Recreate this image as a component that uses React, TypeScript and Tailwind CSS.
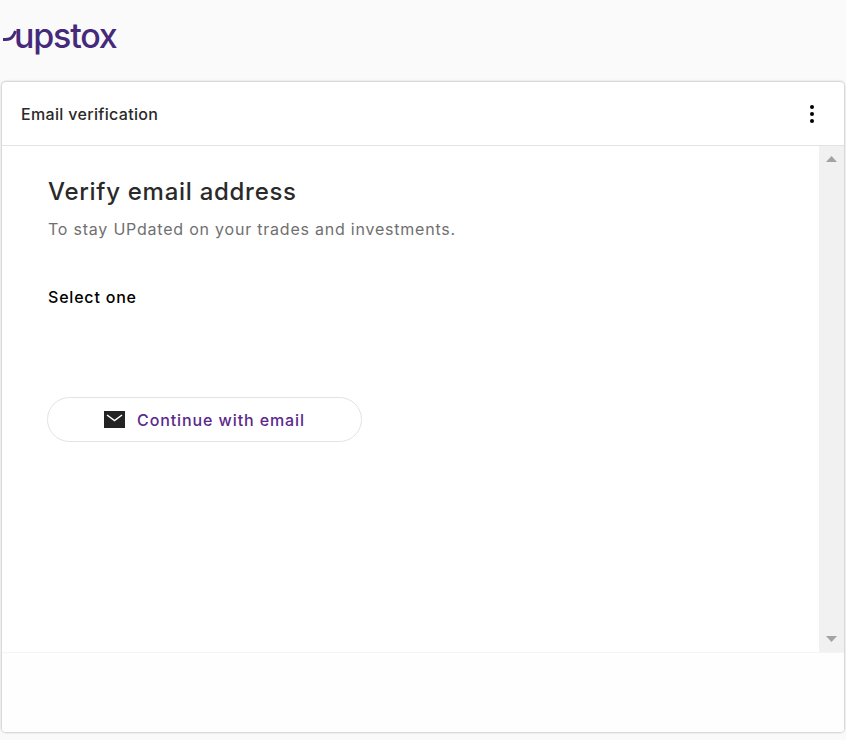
import React from "react";

function MailIcon() {
  return (
    <svg width="21" height="17" viewBox="0 0 21 17" className="shrink-0">
      <rect width="21" height="17" fill="#232323" />
      <path d="M3 4 L10.5 9.5 L18 4" fill="none" stroke="#ffffff" strokeWidth="1.5" />
    </svg>
  );
}

function Scrollbar() {
  return (
    <div className="flex w-[25px] shrink-0 flex-col items-center justify-between bg-[#f1f1f1] py-[10px]">
      <svg width="11" height="6" viewBox="0 0 11 6">
        <path d="M5.5 0 L11 6 L0 6 Z" fill="#a3a3a3" />
      </svg>
      <svg width="11" height="6" viewBox="0 0 11 6">
        <path d="M0 0 L11 0 L5.5 6 Z" fill="#a3a3a3" />
      </svg>
    </div>
  );
}

export default function App() {
  return (
    <div className="h-[740px] w-[846px] overflow-hidden bg-[#fafafa] font-['Inter',sans-serif]">
      <div className="flex h-[82px] items-start pl-[2px] pt-[14px]">
        <div className="flex items-center text-[#452a7c]">
          <svg width="12" height="20" viewBox="0 0 12 20" className="shrink-0 overflow-visible">
            <path d="M1 13.5 C5 13.5 10 15 13.5 5" fill="none" stroke="#452a7c" strokeWidth="3" />
          </svg>
          <span className="text-[34px] font-medium leading-[44px] tracking-[-1.2px]">upstox</span>
        </div>
      </div>

      <div className="mx-[2px] flex h-[650px] flex-col rounded-[4px] bg-white shadow-[0_0_2px_1px_rgba(0,0,0,0.18)]">
        <div className="flex h-[64px] shrink-0 items-center justify-between border-b border-[#e3e3e3] pl-[19px] pr-[30px]">
          <span className="text-[16px] font-medium tracking-[0.33px] text-[#2a2a2a]">Email verification</span>
          <div className="flex flex-col gap-[3px]">
            <div className="h-1 w-1 rounded-full bg-black" />
            <div className="h-1 w-1 rounded-full bg-black" />
            <div className="h-1 w-1 rounded-full bg-black" />
          </div>
        </div>

        <div className="flex min-h-0 flex-1">
          <div className="flex-1 pl-[46px] pt-[28px]">
            <h1 className="text-[24px] font-medium leading-[36px] tracking-[0.72px] text-[#2a2a2a]">
              Verify email address
            </h1>
            <p className="mt-[7px] text-[16px] leading-[24px] tracking-[0.78px] text-[#707070]">
              To stay UPdated on your trades and investments.
            </p>
            <p className="mt-[44px] text-[16px] font-medium leading-[24px] tracking-[0.8px] text-black">
              Select one
            </p>
            <button className="-ml-px mt-[88px] flex h-[45px] w-[315px] items-center justify-center gap-3 rounded-full border border-[#e3e3e3] bg-white">
              <MailIcon />
              <span className="text-[16px] font-medium tracking-[0.9px] text-[#5a298b]">Continue with email</span>
            </button>
          </div>
          <Scrollbar />
        </div>

        <div className="h-[80px] shrink-0 rounded-b-[4px] border-t border-[#f5f5f5] bg-[#fefefe]" />
      </div>
    </div>
  );
}
